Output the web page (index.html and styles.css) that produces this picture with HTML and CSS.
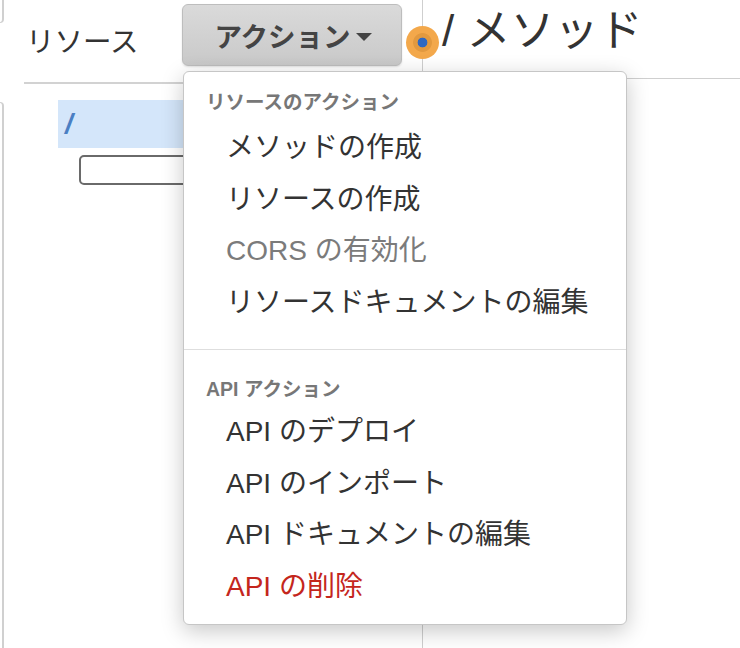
FILE: index.html
```html
<!DOCTYPE html>
<html lang="ja">
<head>
<meta charset="utf-8">
<title>リソース</title>
<link rel="stylesheet" href="styles.css">
</head>
<body>
<div class="page">
  <div class="stub">
    <div class="stub-top"></div>
    <div class="stub-bottom"></div>
  </div>
  <div class="resources">
    <div class="res-head">
      <div class="res-title">リソース</div>
      <button class="action-btn">アクション<span class="caret"></span></button>
    </div>
    <div class="tree">
      <div class="tree-row selected"><span class="slash">/</span></div>
      <div class="tree-input"></div>
    </div>
  </div>
  <div class="methods">
    <div class="methods-head">/ メソッド</div>
  </div>

  <span class="badge"></span>

  <div class="menu">
    <div class="menu-header">リソースのアクション</div>
    <div class="menu-item">メソッドの作成</div>
    <div class="menu-item">リソースの作成</div>
    <div class="menu-item disabled">CORS の有効化</div>
    <div class="menu-item">リソースドキュメントの編集</div>
    <div class="menu-sep"></div>
    <div class="menu-header second">API アクション</div>
    <div class="menu-item">API のデプロイ</div>
    <div class="menu-item">API のインポート</div>
    <div class="menu-item">API ドキュメントの編集</div>
    <div class="menu-item danger">API の削除</div>
  </div>
</div>
</body>
</html>
```

FILE: styles.css
```css
* { box-sizing: border-box; }
html, body {
  margin: 0;
  padding: 0;
  background: #fff;
}
body {
  font-family: "Liberation Sans", "Noto Sans CJK JP", sans-serif;
  color: #333;
}
.page {
  position: relative;
  display: grid;
  grid-template-columns: 4px 419px 1fr;
  width: 740px;
  height: 648px;
  overflow: hidden;
}

/* left edge stubs */
.stub {
  display: flex;
  flex-direction: column;
}
.stub-top {
  height: 23px;
  border-right: 2px solid #d0d0d0;
  border-bottom: 1px solid #d0d0d0;
  border-bottom-right-radius: 5px;
}
.stub-bottom {
  flex: 1;
  margin-top: 79px;
  border-right: 2px solid #d0d0d0;
  border-top: 1px solid #d0d0d0;
  border-top-right-radius: 5px;
}

/* resources panel */
.resources {
  border-right: 1px solid #cfcfcf;
}
.res-head {
  display: flex;
  align-items: flex-start;
  margin-left: 20px;
  height: 84px;
  border-bottom: 2px solid #d2d2d2;
}
.res-title {
  width: 158px;
  padding-left: 2px;
  margin-top: 27px;
  font-size: 28.5px;
  line-height: 31px;
  color: #333;
}
.action-btn {
  display: flex;
  align-items: center;
  justify-content: center;
  margin-top: 4px;
  width: 220px;
  height: 62px;
  padding: 0 0 0 2px;
  border: 1px solid #bdbdbd;
  border-radius: 6px;
  background: linear-gradient(#dadada, #c9c9c9);
  box-shadow: 0 1px 2px rgba(0,0,0,0.12);
  font-family: "Liberation Sans", "Noto Sans CJK JP", sans-serif;
  font-weight: 700;
  font-size: 27.5px;
  color: #444;
}
.caret {
  display: inline-block;
  width: 0;
  height: 0;
  margin-left: 5px;
  margin-top: 4px;
  border-left: 8px solid transparent;
  border-right: 8px solid transparent;
  border-top: 8px solid #444;
}
.tree {
  display: flex;
  flex-direction: column;
}
.tree-row {
  margin-top: 16px;
  margin-left: 54px;
  height: 48px;
  display: flex;
  align-items: center;
  padding-left: 7px;
}
.tree-row.selected {
  background: #d4e6fa;
}
.slash {
  font-size: 28px;
  font-weight: 700;
  font-style: italic;
  color: #4a7fc3;
}
.tree-input {
  margin-top: 7px;
  margin-left: 75px;
  width: 260px;
  height: 30px;
  border: 2px solid #6a6a6a;
  border-radius: 5px;
}

/* methods panel */
.methods-head {
  height: 79px;
  border-bottom: 1px solid #cfcfcf;
  padding-left: 19px;
  padding-top: 7px;
  font-size: 44px;
  line-height: 48px;
  color: #333;
}

/* status badge over the divider */
.badge {
  position: absolute;
  left: 406px;
  top: 26px;
  width: 33px;
  height: 33px;
  border-radius: 50%;
  background: radial-gradient(circle, #2d68c3 0 4.6px, #e2993f 5.2px 9px, #f3a84b 9.8px);
}

/* dropdown menu */
.menu {
  position: absolute;
  left: 183px;
  top: 71px;
  width: 444px;
  height: 554px;
  background: #fff;
  border: 1.5px solid #c6c6c6;
  border-radius: 6px;
  box-shadow: 0 6px 22px rgba(0,0,0,0.22);
  padding-top: 16px;
}
.menu-header {
  padding-left: 22px;
  font-size: 19.5px;
  line-height: 28px;
  font-weight: 700;
  color: #777;
  margin-bottom: 6px;
}
.menu-header.second {
  margin-bottom: 3px;
}
.menu-item {
  padding-left: 42px;
  font-size: 28px;
  line-height: 51.5px;
  color: #333;
}
.menu-item.disabled { color: #7b7b7b; }
.menu-item.danger { color: #c4261d; }
.menu-sep {
  margin: 21px 0 25px;
  height: 0;
  border-top: 1.5px solid #dedede;
}
```
